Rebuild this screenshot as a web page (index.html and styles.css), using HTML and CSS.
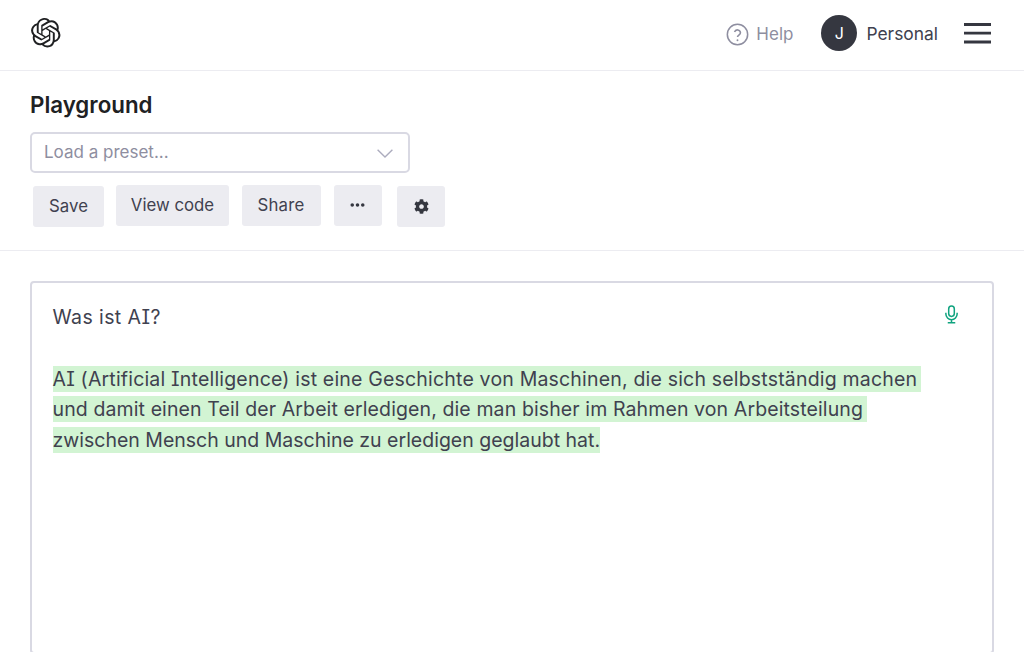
FILE: index.html
```html
<!DOCTYPE html>
<html lang="de">
<head>
<meta charset="utf-8">
<title>Playground</title>
<link rel="stylesheet" href="styles.css">
</head>
<body>
<header class="topbar">
  <svg class="logo" viewBox="0 0 24 24" aria-hidden="true"><path d="M22.2819 9.8211a5.9847 5.9847 0 0 0-.5157-4.9108 6.0462 6.0462 0 0 0-6.5098-2.9A6.0651 6.0651 0 0 0 4.9807 4.1818a5.9847 5.9847 0 0 0-3.9977 2.9 6.0462 6.0462 0 0 0 .7427 7.0966 5.98 5.98 0 0 0 .511 4.9107 6.051 6.051 0 0 0 6.5146 2.9001A5.9847 5.9847 0 0 0 13.2599 24a6.0557 6.0557 0 0 0 5.7718-4.2058 5.9894 5.9894 0 0 0 3.9977-2.9001 6.0557 6.0557 0 0 0-.7475-7.0729zm-9.022 12.6081a4.4755 4.4755 0 0 1-2.8764-1.0408l.1419-.0804 4.7783-2.7582a.7948.7948 0 0 0 .3927-.6813v-6.7369l2.02 1.1686a.071.071 0 0 1 .038.052v5.5826a4.504 4.504 0 0 1-4.4945 4.4944zm-9.6607-4.1254a4.4708 4.4708 0 0 1-.5346-3.0137l.142.0852 4.783 2.7582a.7712.7712 0 0 0 .7806 0l5.8428-3.3685v2.3324a.0804.0804 0 0 1-.0332.0615L9.74 19.9502a4.4992 4.4992 0 0 1-6.1408-1.6464zM2.3408 7.8956a4.485 4.485 0 0 1 2.3655-1.9728V11.6a.7664.7664 0 0 0 .3879.6765l5.8144 3.3543-2.0201 1.1685a.0757.0757 0 0 1-.071 0l-4.8303-2.7865A4.504 4.504 0 0 1 2.3408 7.872zm16.5963 3.8558L13.1038 8.364 15.1192 7.2a.0757.0757 0 0 1 .071 0l4.8303 2.7913a4.4944 4.4944 0 0 1-.6765 8.1042v-5.6772a.79.79 0 0 0-.407-.667zm2.0107-3.0231l-.142-.0852-4.7735-2.7818a.7759.7759 0 0 0-.7854 0L9.409 9.2297V6.8974a.0662.0662 0 0 1 .0284-.0615l4.8303-2.7866a4.4992 4.4992 0 0 1 6.6802 4.66zM8.3065 12.863l-2.02-1.1638a.0804.0804 0 0 1-.038-.0567V6.0742a4.4992 4.4992 0 0 1 7.3757-3.4537l-.142.0805L8.704 5.459a.7948.7948 0 0 0-.3927.6813zm1.0976-2.3654l2.602-1.4998 2.6069 1.4998v2.9994l-2.5974 1.4997-2.6067-1.4997Z"/></svg>
  <nav class="topnav">
    <a class="help">
      <svg class="help-icon" viewBox="0 0 24 24" aria-hidden="true"><circle cx="12" cy="12" r="10.6"/><path d="M8.9 9.3a3.2 3.2 0 0 1 6.2 1c0 2.1-3.1 2.6-3.1 4.3"/><circle class="dot" cx="12" cy="18" r="1"/></svg>
      <span class="help-label">Help</span>
    </a>
    <a class="account">
      <span class="avatar">J</span>
      <span>Personal</span>
    </a>
    <svg class="menu" viewBox="0 0 28 22" aria-hidden="true"><path d="M0 2.5h27M0 11.2h27M0 20h27"/></svg>
  </nav>
</header>

<section class="toolbar">
  <h1 class="title">Playground</h1>
  <div class="select">
    <span>Load a preset...</span>
    <svg class="chevron" viewBox="0 0 16 9" aria-hidden="true"><path d="M.6.8 8 8l7.4-7.2"/></svg>
  </div>
  <div class="actions">
    <button class="btn btn-save">Save</button>
    <button class="btn btn-view">View code</button>
    <button class="btn btn-share">Share</button>
    <button class="btn btn-icon btn-more" aria-label="More"><svg class="dots" viewBox="0 0 16 4" aria-hidden="true"><circle cx="2.4" cy="2" r="1.9"/><circle cx="8" cy="2" r="1.9"/><circle cx="13.6" cy="2" r="1.9"/></svg></button>
    <button class="btn btn-icon btn-gear" aria-label="Settings"><svg class="gear" viewBox="0 0 512 512" aria-hidden="true"><path d="M487.4 315.7l-42.6-24.6c4.3-23.2 4.3-47 0-70.2l42.6-24.6c4.9-2.8 7.1-8.6 5.5-14-11.1-35.6-30-67.8-54.7-94.6-3.8-4.1-10-5.1-14.8-2.3L380.8 110c-17.9-15.4-38.5-27.3-60.8-35.1V25.8c0-5.6-3.9-10.5-9.4-11.7-36.7-8.2-74.3-7.8-109.2 0-5.5 1.2-9.4 6.1-9.4 11.7V75c-22.2 7.9-42.8 19.8-60.8 35.1L88.7 85.5c-4.9-2.8-11-1.9-14.8 2.3-24.7 26.7-43.6 58.9-54.7 94.6-1.7 5.4.6 11.2 5.5 14L67.3 221c-4.3 23.2-4.3 47 0 70.2l-42.6 24.6c-4.9 2.8-7.1 8.6-5.5 14 11.1 35.6 30 67.8 54.7 94.6 3.8 4.1 10 5.1 14.8 2.3l42.6-24.6c17.9 15.4 38.5 27.3 60.8 35.1v49.2c0 5.6 3.9 10.5 9.4 11.7 36.7 8.2 74.3 7.8 109.2 0 5.5-1.2 9.4-6.1 9.4-11.7v-49.2c22.2-7.9 42.8-19.8 60.8-35.1l42.6 24.6c4.9 2.8 11 1.9 14.8-2.3 24.7-26.7 43.6-58.9 54.7-94.6 1.5-5.5-.7-11.3-5.6-14.1zM256 336c-44.1 0-80-35.9-80-80s35.9-80 80-80 80 35.9 80 80-35.9 80-80 80z"/></svg></button>
  </div>
</section>

<main class="workspace">
  <div class="editor">
    <svg class="mic" viewBox="0 0 16 20" aria-hidden="true"><rect x="5" y="1" width="6" height="11" rx="3"/><path d="M2 8.2v1.3a6 6 0 0 0 12 0V8.2M8 15.5v3M4 18.7h8"/></svg>
    <p class="prompt">Was ist AI?</p>
    <p class="completion"><mark class="line line-pad line-wide">AI (Artificial Intelligence) ist eine Geschichte von Maschinen, die sich selbstständig machen</mark><br><mark class="line line-pad">und damit einen Teil der Arbeit erledigen, die man bisher im Rahmen von Arbeitsteilung</mark><br><mark class="line line-tight">zwischen Mensch und Maschine zu erledigen geglaubt hat.</mark></p>
  </div>
</main>
</body>
</html>
```

FILE: styles.css
```css
* { box-sizing: border-box; }
html, body { margin: 0; height: 100%; }
body {
  background: #fff;
  color: #353740;
  font-family: Inter, "Noto Sans", sans-serif;
  font-feature-settings: "cv08" 1;
  overflow: hidden;
}
.topbar {
  height: 71px;
  border-bottom: 1px solid #ececf1;
  display: flex;
  align-items: center;
  justify-content: space-between;
  padding: 0 32px 4px 31px;
}
.logo { width: 29.5px; height: 29.5px; fill: #202123; }
.topnav { display: flex; align-items: center; }
.help { display: flex; align-items: center; gap: 7px; color: #8e8ea0; font-size: 17px; margin-right: 28px; }
.help-label { margin-top: 1px; }
.help-icon { width: 23px; height: 23px; fill: none; stroke: #8e8ea0; stroke-width: 1.6; margin-top: 2px; }
.help-icon .dot { fill: #8e8ea0; stroke: none; }
.account { display: flex; align-items: center; gap: 9px; font-size: 17.4px; color: #40414f; margin-right: 26px; }
.avatar {
  width: 36px; height: 36px; border-radius: 50%;
  background: #353740; color: #fff;
  display: flex; align-items: center; justify-content: center;
  font-size: 16px;
}
.menu { width: 28px; height: 22px; fill: none; stroke: #353740; stroke-width: 2.8; }
.toolbar { height: 180px; border-bottom: 1px solid #ececf1; padding: 21px 30px 0; }
.title { margin: 0 0 14px; font-size: 22.3px; line-height: 26px; font-weight: 600; color: #202123; }
.select {
  width: 380px; height: 41px;
  border: 2px solid #d9d9e3; border-radius: 5px;
  display: flex; align-items: center; justify-content: space-between;
  padding: 0 15px 2px 12px;
  color: #8e8ea0; font-size: 17px;
}
.chevron { width: 16px; height: 9px; fill: none; stroke: #acacbe; stroke-width: 1.4; margin-top: 4px; }
.actions { display: flex; align-items: flex-start; margin-top: 12px; }
.btn {
  height: 41px; border: 0; border-radius: 3px;
  background: #ececf1; color: #40414f;
  font: inherit; font-size: 16.8px; padding: 0 0 2px;
  display: flex; align-items: center; justify-content: center;
}
.btn-save { width: 71px; margin: 1px 12px 0 3px; padding-bottom: 1px; }
.btn-view { width: 113px; margin-right: 13px; }
.btn-share { width: 79px; margin-right: 13px; letter-spacing: .2px; padding-right: 1px; }
.btn-more { width: 48px; margin-right: 15px; }
.btn-gear { width: 48px; margin-top: 1px; padding: 0; }
.dots { width: 15px; height: 4px; fill: #353740; margin-right: 1px; }
.gear { width: 15px; height: 15px; fill: #353740; }
.workspace { padding: 30px 30px 0; }
.editor {
  position: relative;
  height: 373px;
  border: 2px solid #d9d9e3; border-radius: 4px;
  padding: 19px 20.5px;
  font-size: 19.5px; line-height: 30.5px;
  letter-spacing: .11px;
  color: #40414f;
}
.prompt { margin: 0 0 31px; letter-spacing: .4px; }
.completion { margin: 0; }
.line { background: #d2f4d3; color: inherit; padding: 1px 0; }
.line-pad { padding-right: 4px; }
.line-wide { letter-spacing: .185px; }
.line-tight { letter-spacing: 0; }
.mic {
  position: absolute; top: 22px; right: 33px;
  width: 15px; height: 19px;
  fill: none; stroke: #10a37f; stroke-width: 1.6;
}
```
